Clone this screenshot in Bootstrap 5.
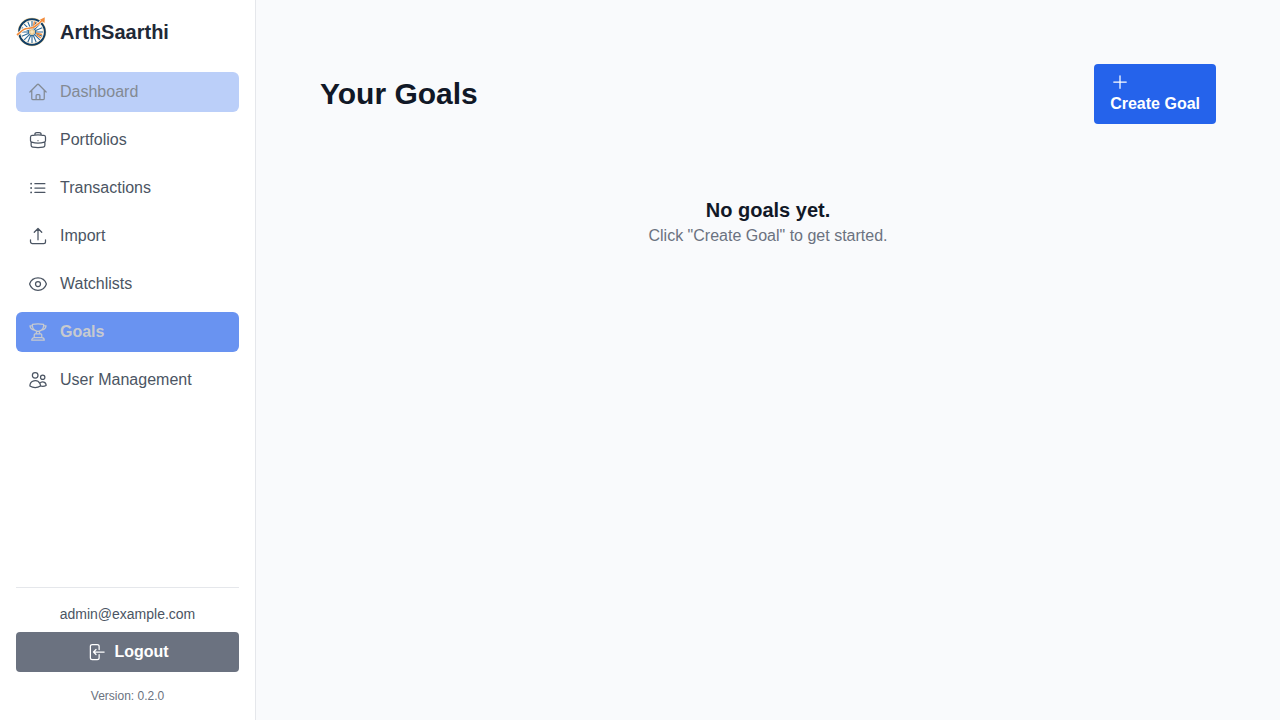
<!DOCTYPE html>
<html lang="en">
<head>
<meta charset="utf-8">
<meta name="viewport" content="width=device-width, initial-scale=1">
<title>ArthSaarthi - Goals</title>
<link href="https://cdn.jsdelivr.net/npm/bootstrap@5.3.0/dist/css/bootstrap.min.css" rel="stylesheet">
<style>
  body { font-family: "Liberation Sans", Arial, sans-serif; background: #f9fafc; color: #111827; }
  svg { flex-shrink: 0; }
  .icon { width: 20px; height: 20px; fill: none; stroke: currentColor; stroke-width: 1.5; stroke-linecap: round; stroke-linejoin: round; }
  .sidebar { width: 256px; background: #fff; border-right: 1px solid #e5e7eb; }
  .brand { height: 64px; font-size: 20px; color: #1f2937; }
  .brand:hover { color: #1f2937; }
  .side-nav .nav-link { color: #4b5563; padding: 8px 12px; border-radius: 6px; }
  .side-nav .nav-link.recent { background: #bbcff9; color: #838a93; }
  .side-nav .nav-link.active { background: #6993f1; color: #c7cacf; }
  .side-foot { border-top: 1px solid #e5e7eb; }
  .user-mail { font-size: 14px; line-height: 20px; color: #4b5563; }
  .version { font-size: 12px; line-height: 16px; color: #6b7280; }
  .btn { --bs-btn-padding-y: 8px; --bs-btn-padding-x: 16px; --bs-btn-border-width: 0; --bs-btn-border-radius: 4px; --bs-btn-color: #fff; --bs-btn-hover-color: #fff; }
  .btn-logout { --bs-btn-bg: #6b7280; --bs-btn-hover-bg: #4b5563; }
  .btn-create { --bs-btn-bg: #2563eb; --bs-btn-hover-bg: #1d4ed8; }
  .content { padding: 64px; }
  .page-title { font-size: 30px; line-height: 36px; }
  .empty-state { margin-top: 72px; }
  .empty-title { font-size: 20px; line-height: 28px; }
  .empty-text { color: #6b7280; }
</style>
</head>
<body>
<div class="d-flex min-vh-100">
  <aside class="sidebar d-flex flex-column flex-shrink-0 px-3">
    <a href="#" class="brand d-flex align-items-center fw-bold text-decoration-none gap-2">
      <svg width="32" height="32" viewBox="0 0 32 32" fill="none" aria-hidden="true" class="me-1">
        <circle cx="16" cy="16" r="14.200" fill="#e6c88f"/>
        <circle cx="16" cy="16" r="12.800" fill="#fff" stroke="#0f3d66" stroke-width="2"/>
        <circle cx="16" cy="16" r="11.400" stroke="#f3dcb0" stroke-width=".6"/>
        <g stroke="#2f6a96" stroke-width="1.100">
          <path d="M16 5v7M16 20v7M5 16h7M20 16h7M8.200 8.200l5 5M18.800 18.800l5 5M8.200 23.800l5-5M18.800 13.200l5-5"/>
          <path d="M11.800 5.800l2.700 6.500M17.500 19.700l2.700 6.500M20.200 5.800l-2.700 6.500M14.500 19.700l-2.700 6.500M5.800 11.800l6.500 2.700M19.700 17.500l6.500 2.700M5.800 20.200l6.500-2.700M19.700 14.500l6.500-2.700"/>
        </g>
        <path d="M20 17.300l6 1.200M20.500 19l4.500 2.800M17.500 10l1-4.500M19.500 10.500l1.500-4" stroke="#f28c3c" stroke-width="1.400"/>
        <circle cx="16" cy="16" r="3.600" fill="#fff" stroke="#2f6a96" stroke-width="1.200"/>
        <circle cx="16" cy="16" r="2.400" fill="#f7e5bd" stroke="#d9ad5c" stroke-width=".8"/>
        <path d="M1 19C4 16.500 6.500 13.200 10.500 12.500C14 12 16.500 12.400 19 10.500C22 8.300 24 6.500 26.500 4" stroke="#fff" stroke-width="2.800"/>
        <path d="M1 19C4 16.500 6.500 13.200 10.500 12.500C14 12 16.500 12.400 19 10.500C22 8.300 24 6.500 26.500 4" stroke="#f28c3c" stroke-width="1.700"/>
        <path d="M23.800 3.800L28.800 1.200L28.500 7z" fill="#f28c3c"/>
      </svg>
      <span>ArthSaarthi</span>
    </a>
    <nav class="side-nav nav flex-column flex-nowrap gap-2 mt-2 mb-4" aria-label="Main">
      <a href="#" class="nav-link recent d-flex align-items-center">
        <svg class="icon me-2" viewBox="0 0 24 24" aria-hidden="true"><path d="m2.25 12 8.954-8.955c.44-.439 1.152-.439 1.591 0L21.75 12M4.5 9.75v10.125c0 .621.504 1.125 1.125 1.125H9.750v-4.875c0-.621.504-1.125 1.125-1.125h2.250c.621 0 1.125.504 1.125 1.125V21h4.125c.621 0 1.125-.504 1.125-1.125V9.750M8.250 21h8.250"/></svg><span class="ms-1">Dashboard</span></a>
      <a href="#" class="nav-link d-flex align-items-center">
        <svg class="icon me-2" viewBox="0 0 24 24" aria-hidden="true"><path d="M20.25 14.15v4.25c0 1.094-.787 2.036-1.872 2.18-2.087.277-4.216.42-6.378.42s-4.291-.143-6.378-.42c-1.085-.144-1.872-1.086-1.872-2.18v-4.25m16.5 0a2.18 2.18 0 0 0 .75-1.661V8.706c0-1.081-.768-2.015-1.837-2.175a48.114 48.114 0 0 0-3.413-.387m4.5 8.006c-.194.165-.42.295-.673.38A23.978 23.978 0 0 1 12 15.75c-2.648 0-5.195-.429-7.577-1.22a2.016 2.016 0 0 1-.673-.38m0 0A2.18 2.18 0 0 1 3 12.489V8.706c0-1.081.768-2.015 1.837-2.175a48.111 48.111 0 0 1 3.413-.387m7.5 0V5.25A2.25 2.25 0 0 0 13.5 3h-3a2.25 2.25 0 0 0-2.25 2.25v.894m7.5 0a48.667 48.667 0 0 0-7.5 0M12 12.75h.008v.008H12v-.008Z"/></svg><span class="ms-1">Portfolios</span></a>
      <a href="#" class="nav-link d-flex align-items-center">
        <svg class="icon me-2" viewBox="0 0 24 24" aria-hidden="true"><path d="M8.25 6.75h12M8.25 12h12m-12 5.25h12M3.75 6.75h.007v.008H3.75V6.75Zm.375 0a.375.375 0 1 1-.75 0 .375.375 0 0 1 .75 0ZM3.75 12h.007v.008H3.75V12Zm.375 0a.375.375 0 1 1-.75 0 .375.375 0 0 1 .75 0Zm-.375 5.25h.007v.008H3.75v-.008Zm.375 0a.375.375 0 1 1-.75 0 .375.375 0 0 1 .75 0Z"/></svg><span class="ms-1">Transactions</span></a>
      <a href="#" class="nav-link d-flex align-items-center">
        <svg class="icon me-2" viewBox="0 0 24 24" aria-hidden="true"><path d="M3 16.5v2.25A2.25 2.25 0 0 0 5.25 21h13.5A2.25 2.25 0 0 0 21 18.75V16.5m-13.5-9L12 3m0 0 4.5 4.5M12 3v13.5"/></svg><span class="ms-1">Import</span></a>
      <a href="#" class="nav-link d-flex align-items-center">
        <svg class="icon me-2" viewBox="0 0 24 24" aria-hidden="true"><path d="M2.036 12.322a1.012 1.012 0 0 1 0-.639C3.423 7.51 7.36 4.5 12 4.5c4.638 0 8.573 3.007 9.963 7.178.07.207.07.431 0 .639C20.577 16.49 16.64 19.5 12 19.5c-4.638 0-8.573-3.007-9.963-7.178Z"/><path d="M15 12a3 3 0 1 1-6 0 3 3 0 0 1 6 0Z"/></svg><span class="ms-1">Watchlists</span></a>
      <a href="#" class="nav-link active fw-bold d-flex align-items-center" aria-current="page">
        <svg class="icon me-2" viewBox="0 0 24 24" aria-hidden="true"><path d="M16.5 18.75h-9m9 0a3 3 0 0 1 3 3h-15a3 3 0 0 1 3-3m9 0v-3.375c0-.621-.503-1.125-1.125-1.125h-.871M7.5 18.75v-3.375c0-.621.504-1.125 1.125-1.125h.872m5.007 0H9.497m5.007 0a7.454 7.454 0 0 1-.982-3.172M9.497 14.25a7.454 7.454 0 0 0 .981-3.172M5.25 4.236c-.982.143-1.954.317-2.916.52A6.003 6.003 0 0 0 7.73 9.728M5.25 4.236V4.5c0 2.108.966 3.99 2.48 5.228M5.25 4.236V2.721C7.456 2.41 9.71 2.25 12 2.25c2.291 0 4.545.16 6.75.47v1.516M7.73 9.728a6.726 6.726 0 0 0 2.748 1.35m8.272-6.842V4.5c0 2.108-.966 3.99-2.48 5.228m2.48-5.492a46.32 46.32 0 0 1 2.916.52 6.003 6.003 0 0 1-5.395 4.972m0 0a6.726 6.726 0 0 1-2.749 1.35m0 0a6.772 6.772 0 0 1-3.044 0"/></svg><span class="ms-1">Goals</span></a>
      <a href="#" class="nav-link d-flex align-items-center">
        <svg class="icon me-2" viewBox="0 0 24 24" aria-hidden="true"><path d="M15 19.128a9.38 9.38 0 0 0 2.625.372 9.337 9.337 0 0 0 4.121-.952 4.125 4.125 0 0 0-7.533-2.493M15 19.128v-.003c0-1.113-.285-2.16-.786-3.07M15 19.128v.106A12.318 12.318 0 0 1 8.624 21c-2.331 0-4.512-.645-6.374-1.766l-.001-.109a6.375 6.375 0 0 1 11.964-3.07M12 6.375a3.375 3.375 0 1 1-6.75 0 3.375 3.375 0 0 1 6.75 0Zm8.25 2.25a2.625 2.625 0 1 1-5.25 0 2.625 2.625 0 0 1 5.25 0Z"/></svg><span class="ms-1">User Management</span></a>
    </nav>
    <div class="side-foot mt-auto py-3 text-center">
      <div class="user-mail mb-2">admin@example.com</div>
      <button type="button" class="btn btn-logout w-100 fw-bold d-flex align-items-center justify-content-center gap-2">
        <svg class="icon" viewBox="0 0 24 24" aria-hidden="true"><path d="M15.75 9V5.25A2.25 2.25 0 0 0 13.5 3h-6a2.25 2.25 0 0 0-2.25 2.25v13.5A2.25 2.25 0 0 0 7.5 21h6a2.25 2.25 0 0 0 2.25-2.25V15M12 9l-3 3m0 0 3 3m-3-3h12.75"/></svg>
        Logout
      </button>
      <div class="version mt-3">Version: 0.2.0</div>
    </div>
  </aside>
  <main class="content flex-grow-1">
    <div class="d-flex justify-content-between align-items-center">
      <h1 class="page-title fw-bold mb-0">Your Goals</h1>
      <button type="button" class="btn btn-create fw-bold">
        <svg class="icon d-block" viewBox="0 0 24 24" aria-hidden="true"><path d="M12 4.500v15m7.500-7.500h-15"/></svg>
        Create Goal
      </button>
    </div>
    <div class="empty-state text-center">
      <h2 class="empty-title fw-bold mb-0">No goals yet.</h2>
      <p class="empty-text mb-0">Click "Create Goal" to get started.</p>
    </div>
  </main>
</div>
<script src="https://cdn.jsdelivr.net/npm/bootstrap@5.3.0/dist/js/bootstrap.bundle.min.js"></script>
</body>
</html>
